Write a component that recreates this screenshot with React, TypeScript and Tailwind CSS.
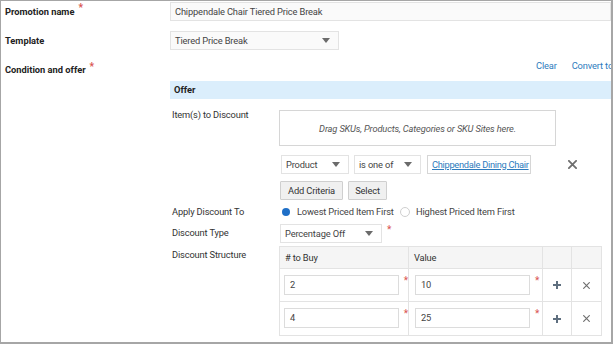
import React from "react";

const Caret = () => (
  <svg width="8" height="5" viewBox="0 0 8 5" className="shrink-0">
    <path d="M0 0 L8 0 L4 5 Z" fill="#6b6b6b" />
  </svg>
);

const Star = ({ className = "" }: { className?: string }) => (
  <span className={"text-[#d9534f] text-[10px] leading-none " + className}>*</span>
);

const XIcon = ({ size = 9, stroke = 2 }: { size?: number; stroke?: number }) => (
  <svg width={size} height={size} viewBox="0 0 10 10">
    <path d="M1 1 L9 9 M9 1 L1 9" stroke="#6e6e6e" strokeWidth={stroke} strokeLinecap="square" />
  </svg>
);

const PlusIcon = () => (
  <svg width="8" height="8" viewBox="0 0 8 8">
    <path d="M4 0 V8 M0 4 H8" stroke="#5f6f7f" strokeWidth="2" />
  </svg>
);

export default function App() {
  return (
    <div
      className="w-[613px] h-[344px] bg-white border-t border-l border-r-2 border-b-2 border-[#a6a6a6] overflow-hidden text-[9.3px] tracking-[-0.15px] leading-[14px] text-[#333] whitespace-nowrap"
      style={{ fontFamily: 'Roboto, "Open Sans", sans-serif' }}
    >
      {/* Promotion name */}
      <div className="flex items-center h-[19px] mt-[1px]">
        <div className="w-[169px] pl-[4px] font-bold text-[#222] flex items-start gap-[4px] tracking-normal">
          <span>Promotion name</span>
          <Star className="-mt-[2px]" />
        </div>
        <div className="w-[441px] h-[19px] border border-[#e3e3e3] bg-[#fafafa] flex items-center pl-[4px] text-[#444]">
          Chippendale Chair Tiered Price Break
        </div>
      </div>

      {/* Template */}
      <div className="flex items-center h-[19px] mt-[10px]">
        <div className="w-[169px] pl-[4px] font-bold text-[#222] tracking-normal">Template</div>
        <div className="w-[169px] h-[19px] border border-[#e3e3e3] bg-[#fafafa] flex items-center justify-between pl-[4px] pr-[8px] text-[#444]">
          <span>Tiered Price Break</span>
          <Caret />
        </div>
      </div>

      {/* Condition and offer */}
      <div className="flex h-[31px] overflow-hidden">
        <div className="w-[169px] shrink-0 pl-[4px] font-bold text-[#222] flex items-start gap-[4px] pt-[13px] tracking-normal">
          <span>Condition and offer</span>
          <Star className="-mt-[1px]" />
        </div>
        <div className="flex gap-[15px] text-[#2d7bbd] pt-[9px] pl-[366px] shrink-0">
          <span>Clear</span>
          <span>Convert to</span>
        </div>
      </div>

      {/* Offer section */}
      <div className="ml-[169px]">
        <div className="h-[18px] bg-[#dbeefc] flex items-center pl-[4px] font-bold text-[#222] tracking-normal">Offer</div>

        <div className="flex mt-[11px]">
          <div className="w-[109px] pl-[2px] text-[#333] -mt-[2px]">Item(s) to Discount</div>
          <div className="flex flex-col">
            <div className="w-[277px] h-[36px] border border-[#d6d6d6] flex items-center justify-center italic text-[#555] pt-[2px]">
              Drag SKUs, Products, Categories or SKU Sites here.
            </div>
            <div className="flex items-center mt-[9px] ml-[2px]">
              <div className="w-[68px] h-[19px] border border-[#e3e3e3] flex items-center justify-between pl-[4px] pr-[8px] text-[#444]">
                <span>Product</span>
                <Caret />
              </div>
              <div className="w-[67px] h-[19px] border border-[#e3e3e3] flex items-center justify-between pl-[4px] pr-[8px] ml-[5px] text-[#444]">
                <span>is one of</span>
                <Caret />
              </div>
              <div className="w-[104px] h-[19px] border border-[#d6d6d6] flex items-center pl-[4px] ml-[6px] text-[#2d7bbd] underline tracking-[-0.3px]">
                Chippendale Dining Chair
              </div>
              <div className="ml-[37px]">
                <XIcon size={9} stroke={2} />
              </div>
            </div>
            <div className="flex items-center mt-[7px] ml-[1px] gap-[5px]">
              <div className="w-[63px] h-[19px] border border-[#cfcfcf] bg-[#f0f0f0] rounded-[1px] flex items-center justify-center text-[#333]">
                Add Criteria
              </div>
              <div className="w-[39px] h-[19px] border border-[#cfcfcf] bg-[#f0f0f0] rounded-[1px] flex items-center justify-center text-[#333]">
                Select
              </div>
            </div>
          </div>
        </div>

        {/* Apply Discount To */}
        <div className="flex items-center mt-[5px] h-[14px]">
          <div className="w-[109px] pl-[2px]">Apply Discount To</div>
          <div className="flex items-center ml-[3px]">
            <span className="w-[8px] h-[8px] rounded-full bg-[#1f6fc7] inline-block" />
            <span className="ml-[7px] text-[#444] w-[103px]">Lowest Priced Item First</span>
            <span className="w-[10px] h-[10px] rounded-full border border-[#cfcfcf] inline-block" />
            <span className="ml-[6px] text-[#444]">Highest Priced Item First</span>
          </div>
        </div>

        {/* Discount Type */}
        <div className="flex items-start mt-[5px]">
          <div className="w-[109px] pl-[2px] pt-[2px]">Discount Type</div>
          <div className="w-[102px] h-[19px] border border-[#e3e3e3] flex items-center justify-between pl-[4px] pr-[8px] ml-[1px] text-[#444]">
            <span>Percentage Off</span>
            <Caret />
          </div>
          <Star className="ml-[5px] mt-[1px]" />
        </div>

        {/* Discount Structure */}
        <div className="flex items-start mt-[3px]">
          <div className="w-[109px] pl-[2px] pt-[2px]">Discount Structure</div>
          <div className="border border-[#e3e3e3] w-[323px]">
            <div className="flex h-[22px] bg-[#f5f5f5] border-b border-[#e3e3e3]">
              <div className="w-[129px] flex items-center pl-[5px] border-r border-[#e3e3e3]"># to Buy</div>
              <div className="w-[134px] flex items-center pl-[5px] border-r border-[#e3e3e3]">Value</div>
              <div className="w-[29px] border-r border-[#e3e3e3]" />
              <div className="flex-1" />
            </div>
            {["2:10", "4:25"].map((r, i) => {
              const [a, b] = r.split(":");
              return (
                <div key={i} className={"flex h-[33px] " + (i === 0 ? "border-b border-[#e3e3e3]" : "")}>
                  <div className="w-[129px] flex items-start pl-[4px] pt-[6px] border-r border-[#e3e3e3]">
                    <div className="w-[115px] h-[20px] border border-[#dcdcdc] flex items-center pl-[5px] text-[#444]">{a}</div>
                    <Star className="ml-[5px] mt-[1px]" />
                  </div>
                  <div className="w-[134px] flex items-start pl-[6px] pt-[6px] border-r border-[#e3e3e3]">
                    <div className="w-[115px] h-[20px] border border-[#dcdcdc] flex items-center pl-[5px] text-[#444]">{b}</div>
                    <Star className="ml-[5px] mt-[1px]" />
                  </div>
                  <div className="w-[29px] flex items-center justify-center border-r border-[#e3e3e3]">
                    <PlusIcon />
                  </div>
                  <div className="flex-1 flex items-center justify-center">
                    <XIcon size={7} stroke={1.6} />
                  </div>
                </div>
              );
            })}
          </div>
        </div>
      </div>
    </div>
  );
}
